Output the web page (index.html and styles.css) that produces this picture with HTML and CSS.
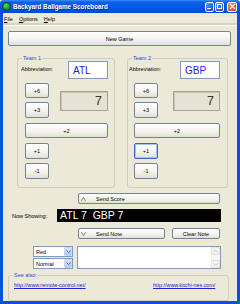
FILE: index.html
```html
<!DOCTYPE html>
<html lang="en">
<head>
    <meta charset="UTF-8">
    <title>Backyard Ballgame Scoreboard</title>
    <link rel="stylesheet" href="styles.css">
</head>
<body>
    <div class="window">
        <div class="titlebar">
            <span class="app-icon"></span>
            <span class="title">Backyard Ballgame Scoreboard</span>
            <div class="caption">
                <span class="cap cap-min"><span></span></span>
                <span class="cap cap-max"><span></span></span>
                <span class="cap cap-close">
                    <svg width="7" height="7" viewBox="0 0 7 7"><path d="M1 1L6 6M6 1L1 6" stroke="#fff" stroke-width="1.3"/></svg>
                </span>
            </div>
        </div>
        <div class="client">
            <div class="menubar">
                <span><u>F</u>ile</span>
                <span><u>O</u>ptions</span>
                <span><u>H</u>elp</span>
            </div>
            <div class="content">
                <button class="btn new-game">New Game</button>

                <div class="teams">
                    <fieldset class="group team team-one">
                        <legend>Team 1</legend>
                        <div class="abbr-row">
                            <label>Abbreviation:</label>
                            <div class="abbr">ATL</div>
                        </div>
                        <div class="controls">
                            <div class="score-row">
                                <div class="stack">
                                    <button class="btn small">+6</button>
                                    <button class="btn small tall">+3</button>
                                </div>
                                <div class="score">7</div>
                            </div>
                            <button class="btn wide">+2</button>
                            <button class="btn small tall plus-one">+1</button>
                            <button class="btn small tall minus-one">-1</button>
                        </div>
                    </fieldset>
                    <fieldset class="group team team-two">
                        <legend>Team 2</legend>
                        <div class="abbr-row">
                            <label>Abbreviation:</label>
                            <div class="abbr">GBP</div>
                        </div>
                        <div class="controls">
                            <div class="score-row">
                                <div class="stack">
                                    <button class="btn small">+6</button>
                                    <button class="btn small tall">+3</button>
                                </div>
                                <div class="score">7</div>
                            </div>
                            <button class="btn wide">+2</button>
                            <button class="btn small tall plus-one focused">+1</button>
                            <button class="btn small tall minus-one">-1</button>
                        </div>
                    </fieldset>
                </div>

                <button class="btn send send-score">
                    <svg width="5" height="4" viewBox="0 0 5 4"><path d="M0.5 3.8L2.5 0.3L4.5 3.8" fill="none" stroke="#555" stroke-width="0.7"/></svg>
                    <span>Send Score</span>
                </button>

                <div class="showing-row">
                    <label>Now Showing:</label>
                    <div class="showing">ATL 7  GBP 7</div>
                </div>

                <div class="note-buttons">
                    <button class="btn send send-note">
                        <svg width="5" height="4" viewBox="0 0 5 4"><path d="M0.5 0.2L2.5 3.7L4.5 0.2" fill="none" stroke="#555" stroke-width="0.7"/></svg>
                        <span>Send Note</span>
                    </button>
                    <button class="btn clear-note">Clear Note</button>
                </div>

                <div class="note-row">
                    <div class="selects">
                        <div class="select"><span>Red</span><span class="drop"><svg width="5" height="3" viewBox="0 0 5 3"><path d="M0.5 0.5L2.5 2.5L4.5 0.5" fill="none" stroke="#4D6185" stroke-width="0.9"/></svg></span></div>
                        <div class="select"><span>Normal</span><span class="drop"><svg width="5" height="3" viewBox="0 0 5 3"><path d="M0.5 0.5L2.5 2.5L4.5 0.5" fill="none" stroke="#4D6185" stroke-width="0.9"/></svg></span></div>
                    </div>
                    <div class="note">
                        <div class="note-text"></div>
                        <div class="scrollbar">
                            <span class="arrow"><svg width="5" height="3" viewBox="0 0 5 3"><path d="M0.5 2.5L2.5 0.5L4.5 2.5" fill="none" stroke="#C5C3B8" stroke-width="0.9"/></svg></span>
                            <span class="track"></span>
                            <span class="arrow"><svg width="5" height="3" viewBox="0 0 5 3"><path d="M0.5 0.5L2.5 2.5L4.5 0.5" fill="none" stroke="#C5C3B8" stroke-width="0.9"/></svg></span>
                        </div>
                    </div>
                </div>

                <fieldset class="group see-also">
                    <legend>See also:</legend>
                    <div class="links">
                        <a href="#">http://www.remote-control.net/</a>
                        <a href="#">http://www.kitchi-nes.com/</a>
                    </div>
                </fieldset>
            </div>
        </div>
    </div>
</body>
</html>
```

FILE: styles.css
```css
* { padding: 0; margin: 0; box-sizing: border-box; }
body {
    width: 240px;
    height: 304px;
    overflow: hidden;
    background: #fff;
    font-family: "Liberation Sans", Arial, sans-serif;
    font-size: 5.5px;
    color: #000;
}
.window {
    width: 240px;
    height: 304px;
    display: flex;
    flex-direction: column;
    background: #0653DE;
    border-radius: 4px 4px 0 0;
}

/* title bar */
.titlebar {
    height: 13px;
    display: flex;
    align-items: center;
    padding: 0 3px 0 2px;
    background: linear-gradient(#3D8DF6 0, #0D5FE8 2px, #0257E6 60%, #0049D0 100%);
    border-radius: 4px 4px 0 0;
}
.app-icon {
    width: 9px;
    height: 9px;
    border-radius: 50%;
    border: 1px solid #123A12;
    background: radial-gradient(circle at 40% 35%, #4BE05A, #13901C 70%);
}
.title {
    margin-left: 2px;
    color: #fff;
    font-weight: bold;
    font-size: 6.3px;
    text-shadow: 1px 1px 0 #0A2A9A;
}
.caption {
    margin-left: auto;
    display: flex;
    gap: 1px;
}
.cap {
    width: 9px;
    height: 10px;
    border: 1px solid #fff;
    border-radius: 2px;
    background: linear-gradient(135deg, #6C9BF6, #2A63E4 60%, #1D50D0);
    display: flex;
    align-items: center;
    justify-content: center;
}
.cap-min span {
    width: 4px;
    height: 1.5px;
    background: #fff;
    margin-top: 4px;
    margin-right: 1px;
}
.cap-max span {
    width: 5px;
    height: 5px;
    border: 1px solid #fff;
    border-top-width: 1.5px;
}
.cap-close {
    width: 10px;
    margin-left: 2px;
    background: linear-gradient(135deg, #F0946E, #DC5430 60%, #C8401E);
}

/* client area */
.client {
    flex: 1;
    margin: 0 3px 3px;
    background: #ECE9D8;
    display: flex;
    flex-direction: column;
}
.menubar {
    height: 13px;
    display: flex;
    align-items: center;
    gap: 6px;
    padding-left: 1px;
    border-bottom: 1px solid #fff;
    box-shadow: inset 0 -2px 0 #D6D2C2;
}
.menubar span { padding-bottom: 1px; }
.content {
    padding: 5px 5px 0;
}

/* buttons */
.btn {
    font-family: inherit;
    font-size: 5.5px;
    color: #000;
    background: linear-gradient(#FFFFFF, #F4F3EE 55%, #E2E0D5);
    border: 1px solid #71849A;
    border-radius: 2px;
    display: flex;
    align-items: center;
    justify-content: center;
}
.new-game {
    width: 223px;
    height: 15px;
}
.small { width: 24px; height: 15px; }
.tall { height: 16px; }
.focused {
    border-color: #3B66C8;
    box-shadow: inset 0 0 0 1px #A9C3F0;
}

/* team groups */
.teams {
    display: flex;
    gap: 12px;
    margin-top: 9px;
    padding-left: 9px;
}
.group {
    border: 1px solid #D0CDBE;
    border-radius: 3px;
    min-width: 0;
}
.group legend {
    font-size: 5.5px;
    line-height: 6px;
    color: #1A50D2;
    padding: 0 1px;
    margin-left: 4px;
}
.team {
    padding-bottom: 8px;
}
.team-one { width: 98px; }
.team-two { width: 101px; }
.abbr-row {
    height: 18px;
    display: flex;
    align-items: center;
}
.abbr-row label { padding-bottom: 2px; }
.team-one .abbr-row { padding: 0 6px 0 3px; }
.team-two .abbr-row { padding: 0 7px 0 1px; }
.abbr {
    margin-left: auto;
    width: 40px;
    height: 18px;
    background: #fff;
    border: 1px solid #7F9DB9;
    color: #1B22E6;
    font-size: 10px;
    padding-left: 4px;
    display: flex;
    align-items: center;
}
.controls {
    display: flex;
    flex-direction: column;
}
.team-one .controls { padding: 0 6px 0 7px; }
.team-two .controls { padding: 0 7px 0 6px; }
.score-row {
    margin-top: 4px;
    display: flex;
    align-items: center;
}
.stack {
    display: flex;
    flex-direction: column;
    gap: 4px;
}
.score {
    margin-left: auto;
    width: 48px;
    height: 20px;
    background: #E6E3D5;
    border: 1px solid #A5A398;
    box-shadow: inset 1px 1px 0 #C9C6B8;
    font-size: 12.5px;
    color: #333;
    text-align: right;
    padding-right: 5px;
    line-height: 18px;
}
.team-two .score { width: 47px; }
.wide {
    height: 15px;
    margin-top: 5px;
}
.plus-one { margin-top: 5px; }
.minus-one { margin-top: 4px; }

/* score / note controls */
.send {
    justify-content: flex-start;
    gap: 10px;
    padding-left: 2px;
    height: 11px;
}
.send-score {
    margin: 5px 0 0 70px;
    width: 142px;
}
.showing-row {
    margin-top: 5px;
    height: 13px;
    display: flex;
    align-items: center;
}
.showing-row label {
    width: 49px;
    padding-left: 4px;
}
.showing {
    width: 164px;
    height: 13px;
    background: #000;
    color: #fff;
    font-size: 10.5px;
    line-height: 13px;
    padding-left: 3px;
    white-space: pre;
}
.note-buttons {
    margin: 6px 0 0 70px;
    display: flex;
    gap: 7px;
}
.send-note { width: 87px; }
.clear-note { width: 48px; height: 11px; }
.note-row {
    margin-top: 7px;
    display: flex;
    gap: 4px;
    padding-left: 25px;
}
.selects {
    display: flex;
    flex-direction: column;
    gap: 1px;
}
.select {
    width: 40px;
    height: 11px;
    background: #fff;
    border: 1px solid #7F9DB9;
    display: flex;
    align-items: center;
    padding-left: 2px;
}
.select .drop {
    margin-left: auto;
    width: 8px;
    height: 9px;
    border-radius: 1px;
    background: linear-gradient(#D4E1FC, #AFC6F6);
    border: 1px solid #C3D3FD;
    display: flex;
    align-items: center;
    justify-content: center;
}
.note {
    width: 144px;
    height: 23px;
    background: #fff;
    border: 1px solid #7F9DB9;
    display: flex;
}
.note-text { flex: 1; }
.scrollbar {
    width: 9px;
    display: flex;
    flex-direction: column;
    background: #F7F6F1;
}
.scrollbar .arrow {
    height: 8px;
    border: 1px solid #E4E2DA;
    border-radius: 1px;
    background: #F3F2EC;
    display: flex;
    align-items: center;
    justify-content: center;
}
.scrollbar .track { flex: 1; }

/* see also */
.see-also {
    margin-top: 3px;
    width: 221px;
    padding-bottom: 11px;
}
.links {
    margin-top: 4px;
    display: grid;
    grid-template-columns: 139px auto;
    padding-left: 5px;
    line-height: 7px;
}
.links a {
    color: #2323C8;
    font-size: 5.4px;
}
```
